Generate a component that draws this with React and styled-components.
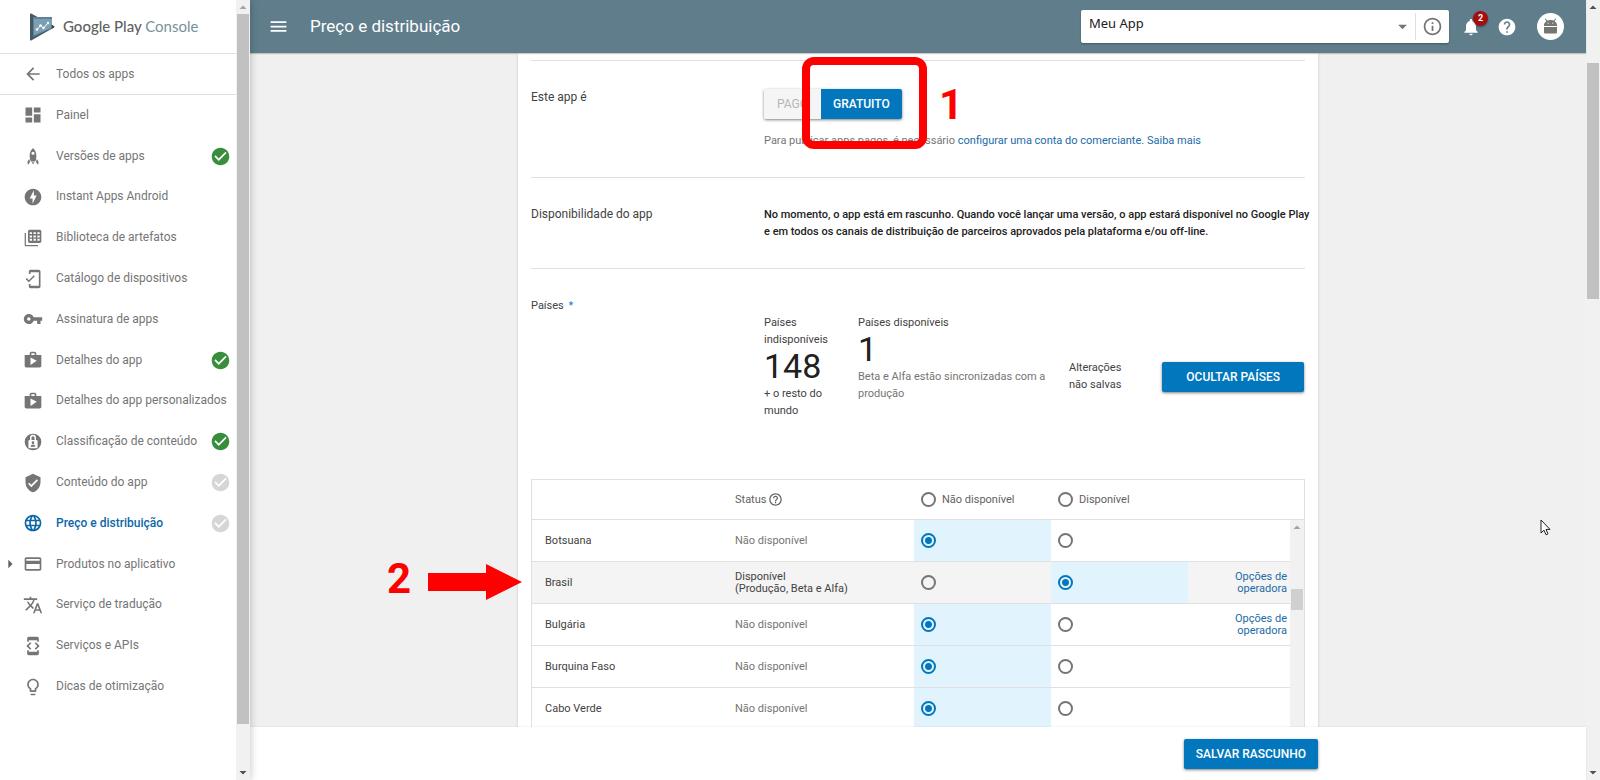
import { useState } from "react";
import styled, { createGlobalStyle } from "styled-components";
import {
  MdArrowBack,
  MdArrowDropDown,
  MdArrowRight,
  MdCheckCircle,
  MdCreditCard,
  MdDashboard,
  MdDeveloperMode,
  MdHelp,
  MdHelpOutline,
  MdInfoOutline,
  MdLanguage,
  MdLightbulbOutline,
  MdMenu,
  MdMobileFriendly,
  MdNotifications,
  MdOfflineBolt,
  MdShop,
  MdTranslate,
  MdVerifiedUser,
  MdVpnKey,
} from "react-icons/md";

const GlobalStyle = createGlobalStyle`
  * {
    box-sizing: border-box;
  }

  body {
    margin: 0;
    font-family: Roboto, "Liberation Sans", sans-serif;
    font-size: 12px;
    line-height: 17px;
    color: #424242;
    background-color: #f0f0f0;
  }

  button, input, select {
    font-family: inherit;
    margin: 0;
  }

  a {
    color: #1c6ba8;
    text-decoration: none;
  }
`;

const Page = styled.div`
  display: flex;
  height: 100vh;
  overflow: hidden;
`;

/* ---------- scrollbar ---------- */

const Track = styled.div`
  display: flex;
  flex-direction: column;
  flex: none;
  width: 14px;
  background-color: #f1f1f1;

  & .arrow {
    display: block;
    flex: none;
    width: 14px;
    height: 14px;
  }
`;

const Spacer = styled.div`
  flex: ${(props) => props.$grow} 0 0;
`;

const Thumb = styled.div`
  flex: ${(props) => props.$grow} 0 0;
  margin: 0 1px;
  background-color: ${(props) => props.$color || "#c1c1c1"};
`;

/* ---------- sidebar ---------- */

const Sidebar = styled.aside`
  position: relative;
  z-index: 2;
  display: flex;
  flex: none;
  width: 250px;
  background-color: #fff;
  box-shadow: 0 0 8px rgba(0, 0, 0, 0.25);
`;

const SidebarBody = styled.div`
  display: flex;
  flex-direction: column;
  flex: 1;
  min-width: 0;
`;

const Brand = styled.div`
  display: flex;
  align-items: center;
  gap: 8px;
  height: 54px;
  padding-left: 29px;
  border-bottom: 1px solid #e0e0e0;
`;

const BrandName = styled.span`
  font-family: Lato, sans-serif;
  font-size: 15px;
  font-weight: 500;
  white-space: nowrap;
  color: #616161;

  & em {
    font-style: normal;
    font-weight: 400;
    color: #78909c;
  }
`;

const NavLink = styled.a`
  display: flex;
  align-items: center;
  position: relative;
  gap: 13px;
  padding: 0 7px 0 23px;
  color: ${(props) => (props.$active ? "#0b67a8" : "#757575")};
  font-weight: ${(props) => (props.$active ? 500 : 400)};
  white-space: nowrap;

  & svg {
    flex: none;
  }

  & .label {
    flex: 1;
    min-width: 0;
  }

  & .expander {
    position: absolute;
    left: 0;
    color: #616161;
  }
`;

const BackLink = styled(NavLink)`
  height: 41px;
  border-bottom: 1px solid #e0e0e0;
`;

const NavList = styled.ul`
  display: grid;
  flex: 1;
  grid-auto-rows: 1fr;
  margin: 0 0 73px;
  padding: 0;
  list-style: none;

  & li {
    display: grid;
    min-height: 24px;
  }
`;

const StatusCheck = styled(MdCheckCircle)`
  color: ${(props) => (props.$done ? "#388e3c" : "#d6d6d6")};
`;

/* ---------- header ---------- */

const Main = styled.div`
  display: flex;
  flex-direction: column;
  flex: 1;
  min-width: 0;
`;

const Header = styled.header`
  position: relative;
  z-index: 1;
  display: flex;
  align-items: center;
  flex: none;
  height: 53px;
  padding: 0 22px 0 18px;
  color: #fff;
  background-color: #607d8b;
  box-shadow: 0 1px 1px rgba(0, 0, 0, 0.2);

  & h1 {
    flex: 1;
    margin: 0 0 0 21px;
    font-size: 17px;
    font-weight: 400;
  }
`;

const IconButton = styled.button`
  display: flex;
  position: relative;
  padding: 0;
  border: none;
  color: inherit;
  background: none;
  cursor: pointer;
`;

const AppPicker = styled.div`
  display: flex;
  align-items: center;
  width: 368px;
  height: 33px;
  border-radius: 2px;
  color: #757575;
  background-color: #fff;
  box-shadow: 0 1px 2px rgba(0, 0, 0, 0.3);

  & select {
    flex: 1;
    height: 33px;
    padding: 0 8px 8px;
    border: none;
    appearance: none;
    font-family: "Noto Sans", sans-serif;
    font-size: 13px;
    color: #212121;
    background: none;
  }

  & .caret {
    margin-right: 2px;
    pointer-events: none;
  }

  & ${IconButton} {
    height: 27px;
    align-items: center;
    padding: 0 6px;
    border-left: 1px solid #e0e0e0;
  }
`;

const HeaderActions = styled.div`
  display: flex;
  align-items: center;
  gap: 16px;
  margin-left: 12px;
`;

const Badge = styled.span`
  position: absolute;
  top: -6px;
  right: -7px;
  width: 15px;
  height: 15px;
  border-radius: 50%;
  font-size: 9px;
  font-weight: 700;
  line-height: 15px;
  text-align: center;
  background-color: #a50e0e;
  box-shadow: 0 1px 2px rgba(0, 0, 0, 0.4);
`;

const Avatar = styled.span`
  display: flex;
  align-items: center;
  justify-content: center;
  width: 27px;
  height: 27px;
  margin-left: 4px;
  border-radius: 50%;
  background-color: #fff;
`;

/* ---------- content ---------- */

const Content = styled.main`
  flex: 1;
  min-height: 0;
  overflow: hidden;
  background-color: #f0f0f0;
`;

const Card = styled.div`
  position: relative;
  max-width: 800px;
  min-height: 100%;
  margin: 0 auto;
  padding: 7px 13px 0;
  background-color: #fff;
  box-shadow: 0 0 3px rgba(0, 0, 0, 0.15);
`;

const Section = styled.section`
  display: grid;
  grid-template-columns: 233px 1fr;
  padding: 28px 0 ${(props) => props.$bottom};
  border-top: 1px solid #e0e0e0;

  & h2 {
    margin: 0;
    font-size: 12px;
    font-weight: 400;
  }

  & h2.small {
    font-size: 11px;
  }

  & h2 span {
    margin-left: 2px;
    color: #1976d2;
  }

  & p {
    margin: 0;
  }
`;

const Notice = styled.div`
  margin-right: -12px;
  font-size: 11px;
  font-weight: 500;
  color: #212121;
`;

const Hint = styled.p`
  padding-top: 13px;
  font-size: 11px;
  color: #757575;
`;

const Button = styled.button`
  height: 30px;
  padding: 0 ${(props) => props.$pad || "12px"};
  border: none;
  border-radius: 2px;
  font-size: 12px;
  font-weight: 500;
  text-transform: uppercase;
  white-space: nowrap;
  color: #fff;
  background-color: #0277bd;
  box-shadow: 0 1px 3px rgba(0, 0, 0, 0.5);
  cursor: pointer;
`;

const Toggle = styled.div`
  display: inline-flex;
  border-radius: 2px;
  box-shadow: 0 1px 3px rgba(0, 0, 0, 0.5);

  & ${Button} {
    border-radius: 0 2px 2px 0;
    box-shadow: none;
  }

  & ${Button}:disabled {
    border-radius: 2px 0 0 2px;
    font-weight: 400;
    color: #b5b5b5;
    background-color: #f5f5f5;
    cursor: default;
  }
`;

const Stats = styled.div`
  display: flex;
  align-items: flex-start;
  padding: 17px 1px 0 0;
  font-size: 11px;
`;

const Stat = styled.div`
  flex: none;
  width: ${(props) => props.$width};
  padding-right: 24px;

  & strong {
    display: block;
    font-size: 34px;
    font-weight: 400;
    line-height: 37px;
    color: #212121;
  }

  & small {
    display: block;
    margin-right: -16px;
    font-size: 11px;
    color: #757575;
  }
`;

const Aside = styled.div`
  align-self: center;
  width: 56px;
  margin: 18px auto 0 0;
`;

const HideButton = styled(Button)`
  align-self: center;
  margin-top: 20px;
`;

/* ---------- countries table ---------- */

const TableBox = styled.div`
  position: relative;
  border: 1px solid #e0e0e0;
`;

const Table = styled.table`
  width: 100%;
  border-collapse: separate;
  border-spacing: 0;
  table-layout: fixed;
  font-size: 11px;
  line-height: 12px;

  & th,
  & td {
    height: 42px;
    padding: 0 13px;
    border-bottom: 1px solid #e0e0e0;
    text-align: left;
    font-weight: 400;
  }

  & thead th {
    height: 40px;
    color: #616161;
  }
`;

const Row = styled.tr`
  background-color: ${(props) => (props.$highlight ? "#f4f4f4" : "#fff")};
`;

const StatusCell = styled.td`
  color: ${(props) => (props.$on ? "#424242" : "#757575")};
`;

const OptionCell = styled.td`
  && {
    padding: 0 7px;
  }
  background-color: ${(props) => (props.$on ? "#e1f4fd" : "transparent")};
`;

const LinkCell = styled.td`
  && {
    padding-right: 17px;
    text-align: right;
  }

  & a {
    display: inline-block;
    width: 56px;
  }
`;

const RadioLabel = styled.label`
  display: flex;
  align-items: center;
  gap: 6px;
`;

const StatusHead = styled.span`
  display: flex;
  align-items: center;
  gap: 2px;
`;

const Radio = styled.input.attrs({ type: "radio" })`
  display: block;
  flex: none;
  width: 15px;
  height: 15px;
  border: 2px solid #757575;
  border-radius: 50%;
  appearance: none;

  &:checked {
    border-color: #0277bd;
    background: radial-gradient(circle, #0277bd 3px, transparent 4px);
  }
`;

const TableScroll = styled(Track)`
  position: absolute;
  top: 40px;
  right: 0;
  bottom: 0;
`;

/* ---------- footer ---------- */

const Footer = styled.footer`
  flex: none;
  padding: 12px 0 11px;
  background-color: #fff;
  box-shadow: 0 0 2px rgba(0, 0, 0, 0.1);
  z-index: 1;

  & div {
    display: flex;
    justify-content: flex-end;
    max-width: 800px;
    margin: 0 auto;
  }
`;

/* ---------- tutorial marks, they float over the card ---------- */

const MarkBox = styled.div`
  position: absolute;
  top: 4px;
  left: 284px;
  width: 125px;
  height: 92px;
  border: 8px solid #fe0000;
  border-radius: 12px;
  pointer-events: none;
`;

const MarkNumber = styled.span`
  position: absolute;
  top: ${(props) => props.$top};
  left: ${(props) => props.$left};
  font-size: 42px;
  font-weight: 700;
  line-height: 42px;
  color: #fe0000;
`;

const MarkArrow = styled.svg`
  position: absolute;
  top: 510px;
  left: -90px;
`;

const Pointer = styled.svg`
  position: absolute;
  top: 466px;
  left: 1022px;
`;

const Scrollbar = ({ before, size, after, color, as: Bar = Track, muted, end = true }) => (
  <Bar aria-hidden="true">
    <svg className="arrow" viewBox="0 0 14 14">
      <path d="M3.5 9h7L7 5.5z" fill={muted ? "#a3a3a3" : "#505050"} />
    </svg>
    <Spacer $grow={before} />
    <Thumb $grow={size} $color={color} />
    <Spacer $grow={after} />
    {end && (
      <svg className="arrow" viewBox="0 0 14 14">
        <path d="M3.5 5h7L7 8.5z" fill="#505050" />
      </svg>
    )}
  </Bar>
);

const Logo = () => (
  <svg width="26" height="28" viewBox="0 0 26 28">
    <path d="M1 1.2Q1 0 2.2.6L25 13q1 .8 0 1.600L2.2 27.400Q1 28 1 26.800z" fill="#455a64" />
    <path d="M4 4h19v9l2 .9-2 1.400L4 24z" fill="#5f8296" />
    <path d="M5 6h18v8.500L5 22z" fill="#7ba0b4" />
    <path d="M22.500 11.500L25.500 14l-3 2z" fill="#37474f" />
    <path d="M8 16.500l3.500-4 3 2.500 4.500-5" fill="none" stroke="#fff" strokeWidth="1" />
    <g fill="#fff">
      <circle cx="8" cy="16.500" r="1.200" />
      <circle cx="11.500" cy="12.500" r="1.200" />
      <circle cx="14.500" cy="15" r="1.200" />
      <circle cx="19" cy="10" r="1.200" />
    </g>
  </svg>
);

const RocketIcon = ({ size }) => (
  <svg width={size} height={size} viewBox="0 0 24 24" fill="currentColor">
    <path
      fillRule="evenodd"
      d="M12 2.500C9.200 5 8 8 8 12c0 2.500.5 4.600 1.300 6.500h5.400c.8-1.900 1.300-4 1.300-6.500 0-4-1.200-7-4-9.500zm0 4.300a1.900 1.900 0 1 1 0 3.800 1.900 1.900 0 0 1 0-3.800z"
    />
    <path d="M7.300 15.500L5.500 18.500v3.500h1.300l1.700-3zM16.700 15.500l1.800 3v3.500h-1.300l-1.700-3zM10.300 19.500h3.400L12 22z" />
  </svg>
);

const LibraryIcon = ({ size }) => (
  <svg width={size} height={size} viewBox="0 0 24 24" fill="currentColor">
    <path d="M3.500 6H2v14.500c0 .8.7 1.500 1.500 1.500H18v-1.600H3.500z" />
    <path
      fillRule="evenodd"
      d="M8 2h12c1.100 0 2 .9 2 2v12c0 1.100-.9 2-2 2H8c-1.100 0-2-.9-2-2V4c0-1.100.9-2 2-2zM8 5v2.300h2.800V5zm4.600 0v2.300h2.800V5zm4.600 0v2.300H20V5zM8 9v2.300h2.800V9zm4.600 0v2.300h2.800V9zm4.600 0v2.300H20V9zM8 13v2.300h2.800V13zm4.600 0v2.300h2.800V13zm4.600 0v2.300H20V13z"
    />
  </svg>
);

const RatingIcon = ({ size }) => (
  <svg width={size} height={size} viewBox="0 0 24 24">
    <circle cx="12" cy="12" r="10" fill="currentColor" />
    <path d="M9.300 10V6.800a2.700 2.700 0 0 1 5.400 0V10" fill="none" stroke="#fff" strokeWidth="1.800" />
    <rect x="6.500" y="9.500" width="11" height="10" rx="1.500" fill="#fff" />
    <circle cx="12" cy="12.800" r="1.600" fill="currentColor" />
    <path d="M9.200 17.800c0-1.800 1.300-2.700 2.800-2.700s2.800.9 2.800 2.700z" fill="currentColor" />
  </svg>
);

const AndroidIcon = () => (
  <svg width="15" height="17" viewBox="0 0 15 17">
    <path
      fill="#757575"
      fillRule="evenodd"
      d="M2.500.5L4.300 2.600A7 7 0 0 1 7.500 2a7 7 0 0 1 3.200.6L12.500.5l.6.500-1.500 2.200A5 5 0 0 1 14 8H1a5 5 0 0 1 2.400-4.800L1.900 1zM4.700 4.800v1h1v-1zm4.600 0v1h1v-1z"
    />
    <path fill="#757575" d="M1 9h13v5.500q0 1-1 1H2q-1 0-1-1z" />
  </svg>
);

const NAV = [
  { label: "Painel", icon: MdDashboard },
  { label: "Versões de apps", icon: RocketIcon, check: "done" },
  { label: "Instant Apps Android", icon: MdOfflineBolt },
  { label: "Biblioteca de artefatos", icon: LibraryIcon },
  { label: "Catálogo de dispositivos", icon: MdMobileFriendly },
  { label: "Assinatura de apps", icon: MdVpnKey },
  { label: "Detalhes do app", icon: MdShop, check: "done" },
  { label: "Detalhes do app personalizados", icon: MdShop },
  { label: "Classificação de conteúdo", icon: RatingIcon, check: "done" },
  { label: "Conteúdo do app", icon: MdVerifiedUser, check: "todo" },
  { label: "Preço e distribuição", icon: MdLanguage, check: "todo", active: true },
  { label: "Produtos no aplicativo", icon: MdCreditCard, expandable: true },
  { label: "Serviço de tradução", icon: MdTranslate },
  { label: "Serviços e APIs", icon: MdDeveloperMode },
  { label: "Dicas de otimização", icon: MdLightbulbOutline },
];

const COUNTRIES = [
  { id: "bw", name: "Botsuana" },
  { id: "br", name: "Brasil", carrier: true },
  { id: "bg", name: "Bulgária", carrier: true },
  { id: "bf", name: "Burquina Faso" },
  { id: "cv", name: "Cabo Verde" },
];

const CountryRow = ({ country, available, onChange }) => (
  <Row $highlight={available}>
    <td>{country.name}</td>
    <StatusCell $on={available}>
      {available ? (
        <>
          Disponível
          <br />
          (Produção, Beta e Alfa)
        </>
      ) : (
        "Não disponível"
      )}
    </StatusCell>
    <OptionCell $on={!available}>
      <Radio
        name={country.id}
        aria-label={`${country.name}: não disponível`}
        checked={!available}
        onChange={() => onChange(country.id, false)}
      />
    </OptionCell>
    <OptionCell $on={available}>
      <Radio
        name={country.id}
        aria-label={`${country.name}: disponível`}
        checked={available}
        onChange={() => onChange(country.id, true)}
      />
    </OptionCell>
    <LinkCell>{country.carrier && <a href="#operadora">Opções de operadora</a>}</LinkCell>
  </Row>
);

const App = () => {
  const [available, setAvailable] = useState({ br: true });
  const changeHandler = (id, value) => {
    setAvailable((prev) => ({ ...prev, [id]: value }));
  };

  return (
    <Page>
      <GlobalStyle />
      <Sidebar>
        <SidebarBody>
          <Brand>
            <Logo />
            <BrandName>
              Google Play <em>Console</em>
            </BrandName>
          </Brand>
          <BackLink href="#apps">
            <MdArrowBack size={20} />
            <span className="label">Todos os apps</span>
          </BackLink>
          <NavList>
            {NAV.map(({ label, icon: Icon, check, active, expandable }) => (
              <li key={label}>
                <NavLink href="#nav" $active={active}>
                  {expandable && <MdArrowRight className="expander" size={20} />}
                  <Icon size={20} />
                  <span className="label">{label}</span>
                  {check && <StatusCheck size={21} $done={check === "done"} />}
                </NavLink>
              </li>
            ))}
          </NavList>
        </SidebarBody>
        <Scrollbar before={0} size={710} after={42} muted />
      </Sidebar>

      <Main>
        <Header>
          <IconButton aria-label="Menu">
            <MdMenu size={21} />
          </IconButton>
          <h1>Preço e distribuição</h1>
          <AppPicker>
            <select aria-label="App">
              <option>Meu App</option>
            </select>
            <MdArrowDropDown className="caret" size={21} />
            <IconButton aria-label="Informações">
              <MdInfoOutline size={21} />
            </IconButton>
          </AppPicker>
          <HeaderActions>
            <IconButton aria-label="Notificações">
              <MdNotifications size={20} />
              <Badge>2</Badge>
            </IconButton>
            <IconButton aria-label="Ajuda">
              <MdHelp size={20} />
            </IconButton>
            <Avatar>
              <AndroidIcon />
            </Avatar>
          </HeaderActions>
        </Header>

        <Content>
          <Card>
            <Section $bottom="28px">
              <h2>Este app é</h2>
              <div>
                <Toggle>
                  <Button disabled $pad="13px">
                    Pago
                  </Button>
                  <Button>Gratuito</Button>
                </Toggle>
                <Hint>
                  Para publicar apps pagos, é necessário{" "}
                  <a href="#conta">configurar uma conta do comerciante.</a>{" "}
                  <a href="#ajuda">Saiba mais</a>
                </Hint>
              </div>
            </Section>
            <Section $bottom="28px">
              <h2>Disponibilidade do app</h2>
              <Notice>
                No momento, o app está em rascunho. Quando você lançar uma versão, o app estará
                disponível no Google Play e em todos os canais de distribuição de parceiros
                aprovados pela plataforma e/ou off-line.
              </Notice>
            </Section>
            <Section $bottom="60px">
              <h2 className="small">
                Países <span>*</span>
              </h2>
              <Stats>
                <Stat $width="94px">
                  Países indisponíveis
                  <strong>148</strong>
                  <p>+ o resto do mundo</p>
                </Stat>
                <Stat $width="211px">
                  Países disponíveis
                  <strong>1</strong>
                  <small>Beta e Alfa estão sincronizadas com a produção</small>
                </Stat>
                <Aside>Alterações não salvas</Aside>
                <HideButton $pad="24px">Ocultar países</HideButton>
              </Stats>
            </Section>

            <TableBox>
              <Table>
                <colgroup>
                  <col width="190" />
                  <col width="192" />
                  <col width="137" />
                  <col width="137" />
                  <col />
                </colgroup>
                <thead>
                  <tr>
                    <th aria-label="País" />
                    <th>
                      <StatusHead>
                        Status <MdHelpOutline size={15} />
                      </StatusHead>
                    </th>
                    <OptionCell as="th">
                      <RadioLabel>
                        <Radio name="all" /> Não disponível
                      </RadioLabel>
                    </OptionCell>
                    <OptionCell as="th">
                      <RadioLabel>
                        <Radio name="all" /> Disponível
                      </RadioLabel>
                    </OptionCell>
                    <th aria-label="Operadora" />
                  </tr>
                </thead>
                <tbody>
                  {COUNTRIES.map((country) => (
                    <CountryRow
                      key={country.id}
                      country={country}
                      available={!!available[country.id]}
                      onChange={changeHandler}
                    />
                  ))}
                </tbody>
              </Table>
              <Scrollbar
                as={TableScroll}
                before={55}
                size={21}
                after={120}
                color="#d0d0d0"
                end={false}
                muted
              />
            </TableBox>

            <MarkBox />
            <MarkNumber $top="31px" $left="421px">
              1
            </MarkNumber>
            <MarkNumber $top="505px" $left="-131px">
              2
            </MarkNumber>
            <MarkArrow width="95" height="38" viewBox="0 0 95 38">
              <path d="M0 10h58V1l36 18-36 18V28H0z" fill="#fe0000" />
            </MarkArrow>
            <Pointer width="12" height="18" viewBox="0 0 12 18">
              <path
                d="M1 1v13l3-2.800 2 4.600 2-.9-2-4.500h4z"
                fill="#fff"
                stroke="#222"
                strokeWidth="1"
              />
            </Pointer>
          </Card>
        </Content>

        <Footer>
          <div>
            <Button>Salvar rascunho</Button>
          </div>
        </Footer>
      </Main>
      <Scrollbar before={49} size={236} after={467} />
    </Page>
  );
};

export default App;
